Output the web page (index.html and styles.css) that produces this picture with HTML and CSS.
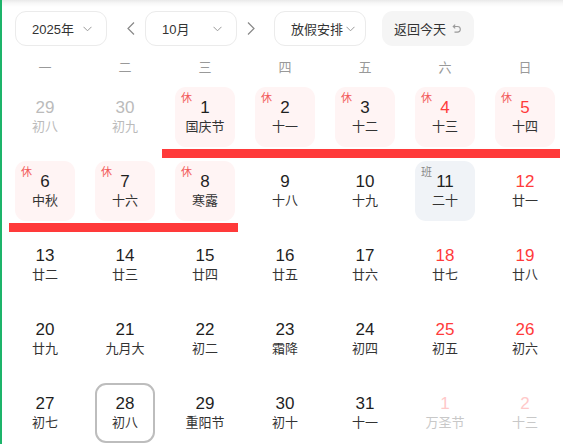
FILE: index.html
```html
<!DOCTYPE html>
<html lang="zh">
<head>
<meta charset="utf-8">
<link rel="stylesheet" href="styles.css">
</head>
<body>
<div class="page">
  <div class="toolbar">
    <div class="select"><span>2025年</span><svg class="chev" width="9" height="6" viewBox="0 0 9 6"><path d="M0.5 0.8 L4.5 4.8 L8.5 0.8" fill="none" stroke="#999" stroke-width="1"/></svg></div>
    <button class="arrow arrow-prev"><svg width="8" height="13" viewBox="0 0 8 13"><path d="M7 0.5 L1 6.5 L7 12.5" fill="none" stroke="#888" stroke-width="1.2"/></svg></button>
    <div class="select"><span>10月</span><svg class="chev" width="9" height="6" viewBox="0 0 9 6"><path d="M0.5 0.8 L4.5 4.8 L8.5 0.8" fill="none" stroke="#999" stroke-width="1"/></svg></div>
    <button class="arrow arrow-next"><svg width="8" height="13" viewBox="0 0 8 13"><path d="M1 0.5 L7 6.5 L1 12.5" fill="none" stroke="#888" stroke-width="1.2"/></svg></button>
    <div class="select select-holiday"><span>放假安排</span><svg class="chev" width="9" height="6" viewBox="0 0 9 6"><path d="M0.5 0.8 L4.5 4.8 L8.5 0.8" fill="none" stroke="#999" stroke-width="1"/></svg></div>
    <button class="today-btn"><span>返回今天</span><svg width="9" height="10" viewBox="0 0 9 10"><path d="M1.5 2.5 H5.5 A2.8 2.8 0 0 1 5.5 8.1 H2.5" fill="none" stroke="#999" stroke-width="1.1"/><path d="M3.2 0.6 L1.2 2.5 L3.2 4.4" fill="none" stroke="#999" stroke-width="1.1"/></svg></button>
  </div>

  <div class="weekdays">
    <div>一</div><div>二</div><div>三</div><div>四</div><div>五</div><div>六</div><div>日</div>
  </div>

  <div class="week">
    <div class="days">
      <div class="day other"><div class="box"><span class="num">29</span><span class="lunar">初八</span></div></div>
      <div class="day other"><div class="box"><span class="num">30</span><span class="lunar">初九</span></div></div>
      <div class="day rest"><div class="box"><span class="tag">休</span><span class="num">1</span><span class="lunar">国庆节</span></div></div>
      <div class="day rest"><div class="box"><span class="tag">休</span><span class="num">2</span><span class="lunar">十一</span></div></div>
      <div class="day rest"><div class="box"><span class="tag">休</span><span class="num">3</span><span class="lunar">十二</span></div></div>
      <div class="day rest weekend"><div class="box"><span class="tag">休</span><span class="num">4</span><span class="lunar">十三</span></div></div>
      <div class="day rest weekend"><div class="box"><span class="tag">休</span><span class="num">5</span><span class="lunar">十四</span></div></div>
    </div>
    <div class="band"><div class="bar" style="margin-left:157px;width:398px"></div></div>
  </div>

  <div class="week">
    <div class="days">
      <div class="day rest"><div class="box"><span class="tag">休</span><span class="num">6</span><span class="lunar">中秋</span></div></div>
      <div class="day rest"><div class="box"><span class="tag">休</span><span class="num">7</span><span class="lunar">十六</span></div></div>
      <div class="day rest"><div class="box"><span class="tag">休</span><span class="num">8</span><span class="lunar">寒露</span></div></div>
      <div class="day"><div class="box"><span class="num">9</span><span class="lunar">十八</span></div></div>
      <div class="day"><div class="box"><span class="num">10</span><span class="lunar">十九</span></div></div>
      <div class="day work"><div class="box"><span class="tag">班</span><span class="num">11</span><span class="lunar">二十</span></div></div>
      <div class="day weekend"><div class="box"><span class="num">12</span><span class="lunar">廿一</span></div></div>
    </div>
    <div class="band"><div class="bar" style="margin-left:4px;width:229px"></div></div>
  </div>

  <div class="week">
    <div class="days">
      <div class="day"><div class="box"><span class="num">13</span><span class="lunar">廿二</span></div></div>
      <div class="day"><div class="box"><span class="num">14</span><span class="lunar">廿三</span></div></div>
      <div class="day"><div class="box"><span class="num">15</span><span class="lunar">廿四</span></div></div>
      <div class="day"><div class="box"><span class="num">16</span><span class="lunar">廿五</span></div></div>
      <div class="day"><div class="box"><span class="num">17</span><span class="lunar">廿六</span></div></div>
      <div class="day weekend"><div class="box"><span class="num">18</span><span class="lunar">廿七</span></div></div>
      <div class="day weekend"><div class="box"><span class="num">19</span><span class="lunar">廿八</span></div></div>
    </div>
    <div class="band"></div>
  </div>

  <div class="week">
    <div class="days">
      <div class="day"><div class="box"><span class="num">20</span><span class="lunar">廿九</span></div></div>
      <div class="day"><div class="box"><span class="num">21</span><span class="lunar">九月大</span></div></div>
      <div class="day"><div class="box"><span class="num">22</span><span class="lunar">初二</span></div></div>
      <div class="day"><div class="box"><span class="num">23</span><span class="lunar">霜降</span></div></div>
      <div class="day"><div class="box"><span class="num">24</span><span class="lunar">初四</span></div></div>
      <div class="day weekend"><div class="box"><span class="num">25</span><span class="lunar">初五</span></div></div>
      <div class="day weekend"><div class="box"><span class="num">26</span><span class="lunar">初六</span></div></div>
    </div>
    <div class="band"></div>
  </div>

  <div class="week">
    <div class="days">
      <div class="day"><div class="box"><span class="num">27</span><span class="lunar">初七</span></div></div>
      <div class="day today"><div class="box"><span class="num">28</span><span class="lunar">初八</span></div></div>
      <div class="day"><div class="box"><span class="num">29</span><span class="lunar">重阳节</span></div></div>
      <div class="day"><div class="box"><span class="num">30</span><span class="lunar">初十</span></div></div>
      <div class="day"><div class="box"><span class="num">31</span><span class="lunar">十一</span></div></div>
      <div class="day next"><div class="box"><span class="num">1</span><span class="lunar">万圣节</span></div></div>
      <div class="day next"><div class="box"><span class="num">2</span><span class="lunar">十三</span></div></div>
    </div>
  </div>
</div>
</body>
</html>
```

FILE: styles.css
```css
html, body {
  margin: 0;
  padding: 0;
  background: #fff;
}
body {
  font-family: "Liberation Sans", "Noto Sans CJK SC", sans-serif;
  color: #222;
  overflow: hidden;
}
.page {
  width: 561px;
  height: 444px;
  border-left: 2px solid #1db46a;
  background: linear-gradient(to bottom, #e9e9e9 0, #f7f7f7 3px, #fff 7px);
  padding-left: 3px;
  box-sizing: content-box;
}
.toolbar {
  display: flex;
  align-items: center;
  height: 35px;
  padding-top: 11px;
  padding-left: 10px;
}
.select {
  box-sizing: border-box;
  width: 92px;
  height: 35px;
  border: 1px solid #ebebeb;
  border-radius: 11px;
  background: #fff;
  display: flex;
  align-items: center;
  justify-content: space-between;
  padding: 0 14px 0 16px;
  font-size: 13px;
  color: #333;
}
.select-holiday {
  padding-right: 10px;
}
.select .chev {
  margin-top: 1px;
}
.arrow {
  border: 0;
  background: none;
  padding: 0;
  width: 8px;
  height: 13px;
  display: flex;
}
.arrow-prev {
  margin: 0 10px 0 20px;
}
.arrow-next {
  margin: 0 19px 0 10px;
}
.today-btn {
  box-sizing: border-box;
  width: 92px;
  height: 35px;
  margin-left: 16px;
  border: 0;
  border-radius: 11px;
  background: #f5f5f5;
  display: flex;
  align-items: center;
  padding: 0 0 0 12px;
  gap: 6px;
  font-family: inherit;
  font-size: 13px;
  color: #333;
}
.weekdays {
  display: grid;
  grid-template-columns: repeat(7, 80px);
  margin-top: 8px;
  height: 28px;
  line-height: 28px;
  margin-bottom: 5px;
  text-align: center;
  font-size: 13px;
  color: #999;
}
.days {
  display: grid;
  grid-template-columns: repeat(7, 80px);
}
.day {
  display: flex;
  justify-content: center;
}
.box {
  position: relative;
  box-sizing: border-box;
  width: 60px;
  height: 60px;
  border-radius: 11px;
  display: flex;
  flex-direction: column;
  align-items: center;
  padding-top: 10px;
}
.num {
  font-size: 17px;
  line-height: 21px;
  color: #1f1f1f;
}
.lunar {
  font-size: 13px;
  line-height: 18px;
  color: #333;
}
.tag {
  position: absolute;
  left: 6px;
  top: 3px;
  font-size: 11px;
  line-height: 16px;
}
.rest .box {
  background: #fff4f4;
}
.rest .tag {
  color: #f25a5a;
}
.work .box {
  background: #f0f3f7;
}
.work .tag {
  color: #888;
}
.weekend .num {
  color: #ff3b3b;
}
.work .num {
  color: #1f1f1f;
}
.other .num,
.other .lunar {
  color: #bbb;
}
.next .num {
  color: #ffc9c9;
}
.next .lunar {
  color: #c8c8c8;
}
.today .box {
  border: 2px solid #bdbdbd;
  padding-top: 8px;
}
.band {
  height: 14px;
  padding-top: 2px;
  box-sizing: border-box;
}
.bar {
  height: 9px;
  background: #ff3a3a;
}
```
